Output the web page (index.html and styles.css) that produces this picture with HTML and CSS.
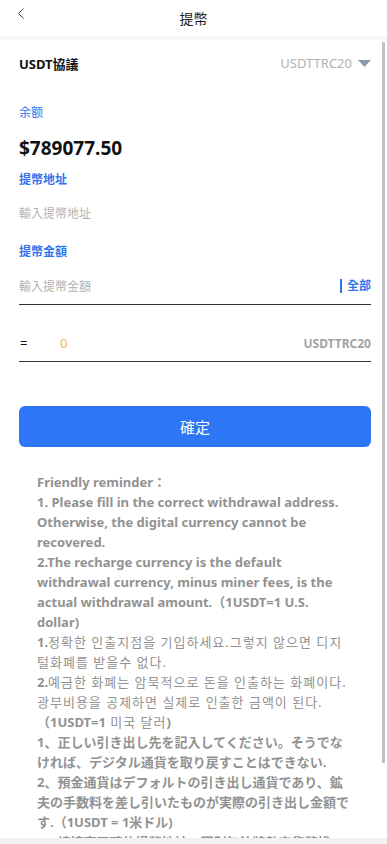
FILE: index.html
```
<!DOCTYPE html>
<html lang="zh-Hant">
<head>
    <meta charset="UTF-8">
    <meta name="viewport" content="width=device-width, initial-scale=1.0">
    <title>提幣</title>
    <link rel="stylesheet" href="styles.css">
</head>
<body>
    <div class="page">
        <div class="nav-bar">
            <a class="nav-back" href="#">
                <svg width="8" height="11" viewBox="0 0 8 11"><path d="M6.5 0.5 L1.5 5.5 L6.5 10.5" fill="none" stroke="#444" stroke-width="1"/></svg>
            </a>
            <div class="nav-title">提幣</div>
            <div class="nav-right"></div>
        </div>
        <div class="nav-shadow"></div>

        <div class="content">
            <div class="protocol-row">
                <span class="protocol-label">USDT協議</span>
                <span class="protocol-value">USDTTRC20
                    <svg width="13" height="7" viewBox="0 0 13 7"><path d="M0 0 H13 L6.5 7 Z" fill="#8d98ac"/></svg>
                </span>
            </div>

            <div class="field-label label-balance">余额</div>
            <div class="balance">$789077.50</div>

            <div class="field-label label-address">提幣地址</div>
            <input type="text" class="input-address" placeholder="輸入提幣地址">

            <div class="field-label label-amount">提幣金額</div>
            <div class="amount-row">
                <input type="text" class="input-amount" placeholder="輸入提幣金額">
                <span class="amount-all">全部</span>
            </div>

            <div class="equal-row">
                <span class="equal-sign">=</span>
                <span class="equal-value">0</span>
                <span class="equal-unit">USDTTRC20</span>
            </div>

            <button class="btn-confirm">確定</button>

            <div class="reminder">
                <p>Friendly reminder：</p>
                <p>1. Please fill in the correct withdrawal address. Otherwise, the digital currency cannot be recovered.</p>
                <p>2.The recharge currency is the default withdrawal currency, minus miner fees, is the actual withdrawal amount.（1USDT=1 U.S. dollar)</p>
                <p class="ko" lang="ko"><b>1.</b>정확한 인출지점을 기입하세요.그렇지 않으면 디지털화폐를 받을수 없다.</p>
                <p class="ko" lang="ko"><b>2.</b>예금한 화폐는 암묵적으로 돈을 인출하는 화폐이다. 광부비용을 공제하면 실제로 인출한 금액이 된다. <span class="nowrap"><b>（1USDT=1</b> 미국 달러<b>)</b></span></p>
                <p class="ja" lang="ja">1、正しい引き出し先を記入してください。そうでなければ、デジタル通貨を取り戻すことはできない.</p>
                <p class="ja" lang="ja">2、預金通貨はデフォルトの引き出し通貨であり、鉱夫の手数料を差し引いたものが実際の引き出し金額です.（1USDT = 1米ドル)</p>
                <p>1、請填寫正確的提幣地址，否則無法將數字貨幣找回。</p>
                <p>2、充值幣種為默認提幣幣種，減去礦工費後為實際提幣金額。（1USDT=1美元）</p>
            </div>
        </div>

        <div class="bottom-bar"></div>
        <div class="scroll-thumb"></div>
    </div>
</body>
</html>
```

FILE: styles.css
```
html, body {
    margin: 0;
    padding: 0;
    background-color: #fff;
}

body {
    font-family: "Noto Sans", "Noto Sans CJK TC", sans-serif;
    color: #111;
}

.page {
    position: relative;
    display: flex;
    flex-direction: column;
    height: 844px;
    overflow: hidden;
}

.nav-bar {
    display: grid;
    grid-template-columns: 60px 1fr 60px;
    align-items: center;
    height: 36px;
    flex-shrink: 0;
}

.nav-back {
    display: flex;
    align-items: center;
    padding-left: 17px;
    height: 100%;
    padding-bottom: 10px;
    box-sizing: border-box;
}

.nav-title {
    text-align: center;
    font-size: 14px;
    color: #222;
}

.nav-shadow {
    height: 4px;
    flex-shrink: 0;
    background: linear-gradient(#f4f4f4, #fbfbfb);
}

.content {
    flex: 1;
    overflow: hidden;
    padding: 0 16px 0 19px;
}

/* scroll indicator drawn over the right edge */
.scroll-thumb {
    position: absolute;
    top: 42px;
    right: 2px;
    width: 3px;
    height: 721px;
    background-color: #c0c0c0;
    z-index: 2;
}

.protocol-row {
    display: flex;
    justify-content: space-between;
    align-items: center;
    height: 46px;
}

.protocol-label {
    font-size: 13px;
    font-weight: bold;
}

.protocol-value {
    display: flex;
    align-items: center;
    gap: 6px;
    font-size: 13px;
    color: #b2b2b2;
}

.field-label {
    font-size: 12px;
    line-height: 20px;
    color: #2f74ee;
    font-weight: 600;
}

.label-balance {
    margin-top: 17px;
    font-weight: normal;
}

.balance {
    margin-top: 11px;
    font-size: 19px;
    line-height: 28px;
    font-weight: bold;
    color: #111;
}

.label-address {
    margin-top: 8px;
}

.input-address,
.input-amount {
    display: block;
    border: none;
    outline: none;
    padding: 0;
    font-family: inherit;
    font-size: 12px;
    background: transparent;
}

.input-address::placeholder,
.input-amount::placeholder {
    color: #b3b3b3;
}

.input-address {
    margin-top: 8px;
    height: 30px;
    width: 100%;
}

.label-amount {
    margin-top: 14px;
}

.amount-row {
    display: flex;
    align-items: center;
    justify-content: space-between;
    height: 36px;
    margin-top: 6px;
    border-bottom: 1px solid #333;
}

.input-amount {
    flex: 1;
    height: 30px;
}

.amount-all {
    font-size: 12px;
    font-weight: bold;
    color: #2f74ee;
    border-left: 2px solid #2f74ee;
    padding-left: 5px;
    line-height: 14px;
}

.equal-row {
    display: flex;
    align-items: center;
    height: 36px;
    margin-top: 20px;
    border-bottom: 1px solid #333;
    font-size: 13px;
}

.equal-sign {
    width: 40px;
    padding-left: 1px;
}

.equal-value {
    color: #f6b73c;
    flex: 1;
}

.equal-unit {
    font-size: 12px;
    font-weight: bold;
    color: #a3a3a3;
}

.btn-confirm {
    display: block;
    width: 100%;
    height: 41px;
    margin-top: 44px;
    border: none;
    border-radius: 6px;
    background-color: #2d76f6;
    color: #fff;
    font-family: inherit;
    font-size: 15px;
}

.reminder {
    margin-top: 25px;
    padding: 0 20px 0 18px;
    font-size: 13px;
    line-height: 20px;
    font-weight: bold;
    color: #929292;
}

.reminder p {
    margin: 0;
}

.reminder .ko {
    font-family: "Noto Sans", "Noto Sans CJK KR", sans-serif;
    font-weight: normal;
    letter-spacing: 1px;
    word-break: break-all;
}

.reminder .ko b {
    font-weight: bold;
    letter-spacing: 0;
}

.reminder .nowrap {
    white-space: nowrap;
    word-break: normal;
}

.reminder .ja {
    font-family: "Noto Sans", "Noto Sans CJK JP", sans-serif;
}

.bottom-bar {
    height: 6px;
    flex-shrink: 0;
    background-color: #f1f1f1;
}
```
